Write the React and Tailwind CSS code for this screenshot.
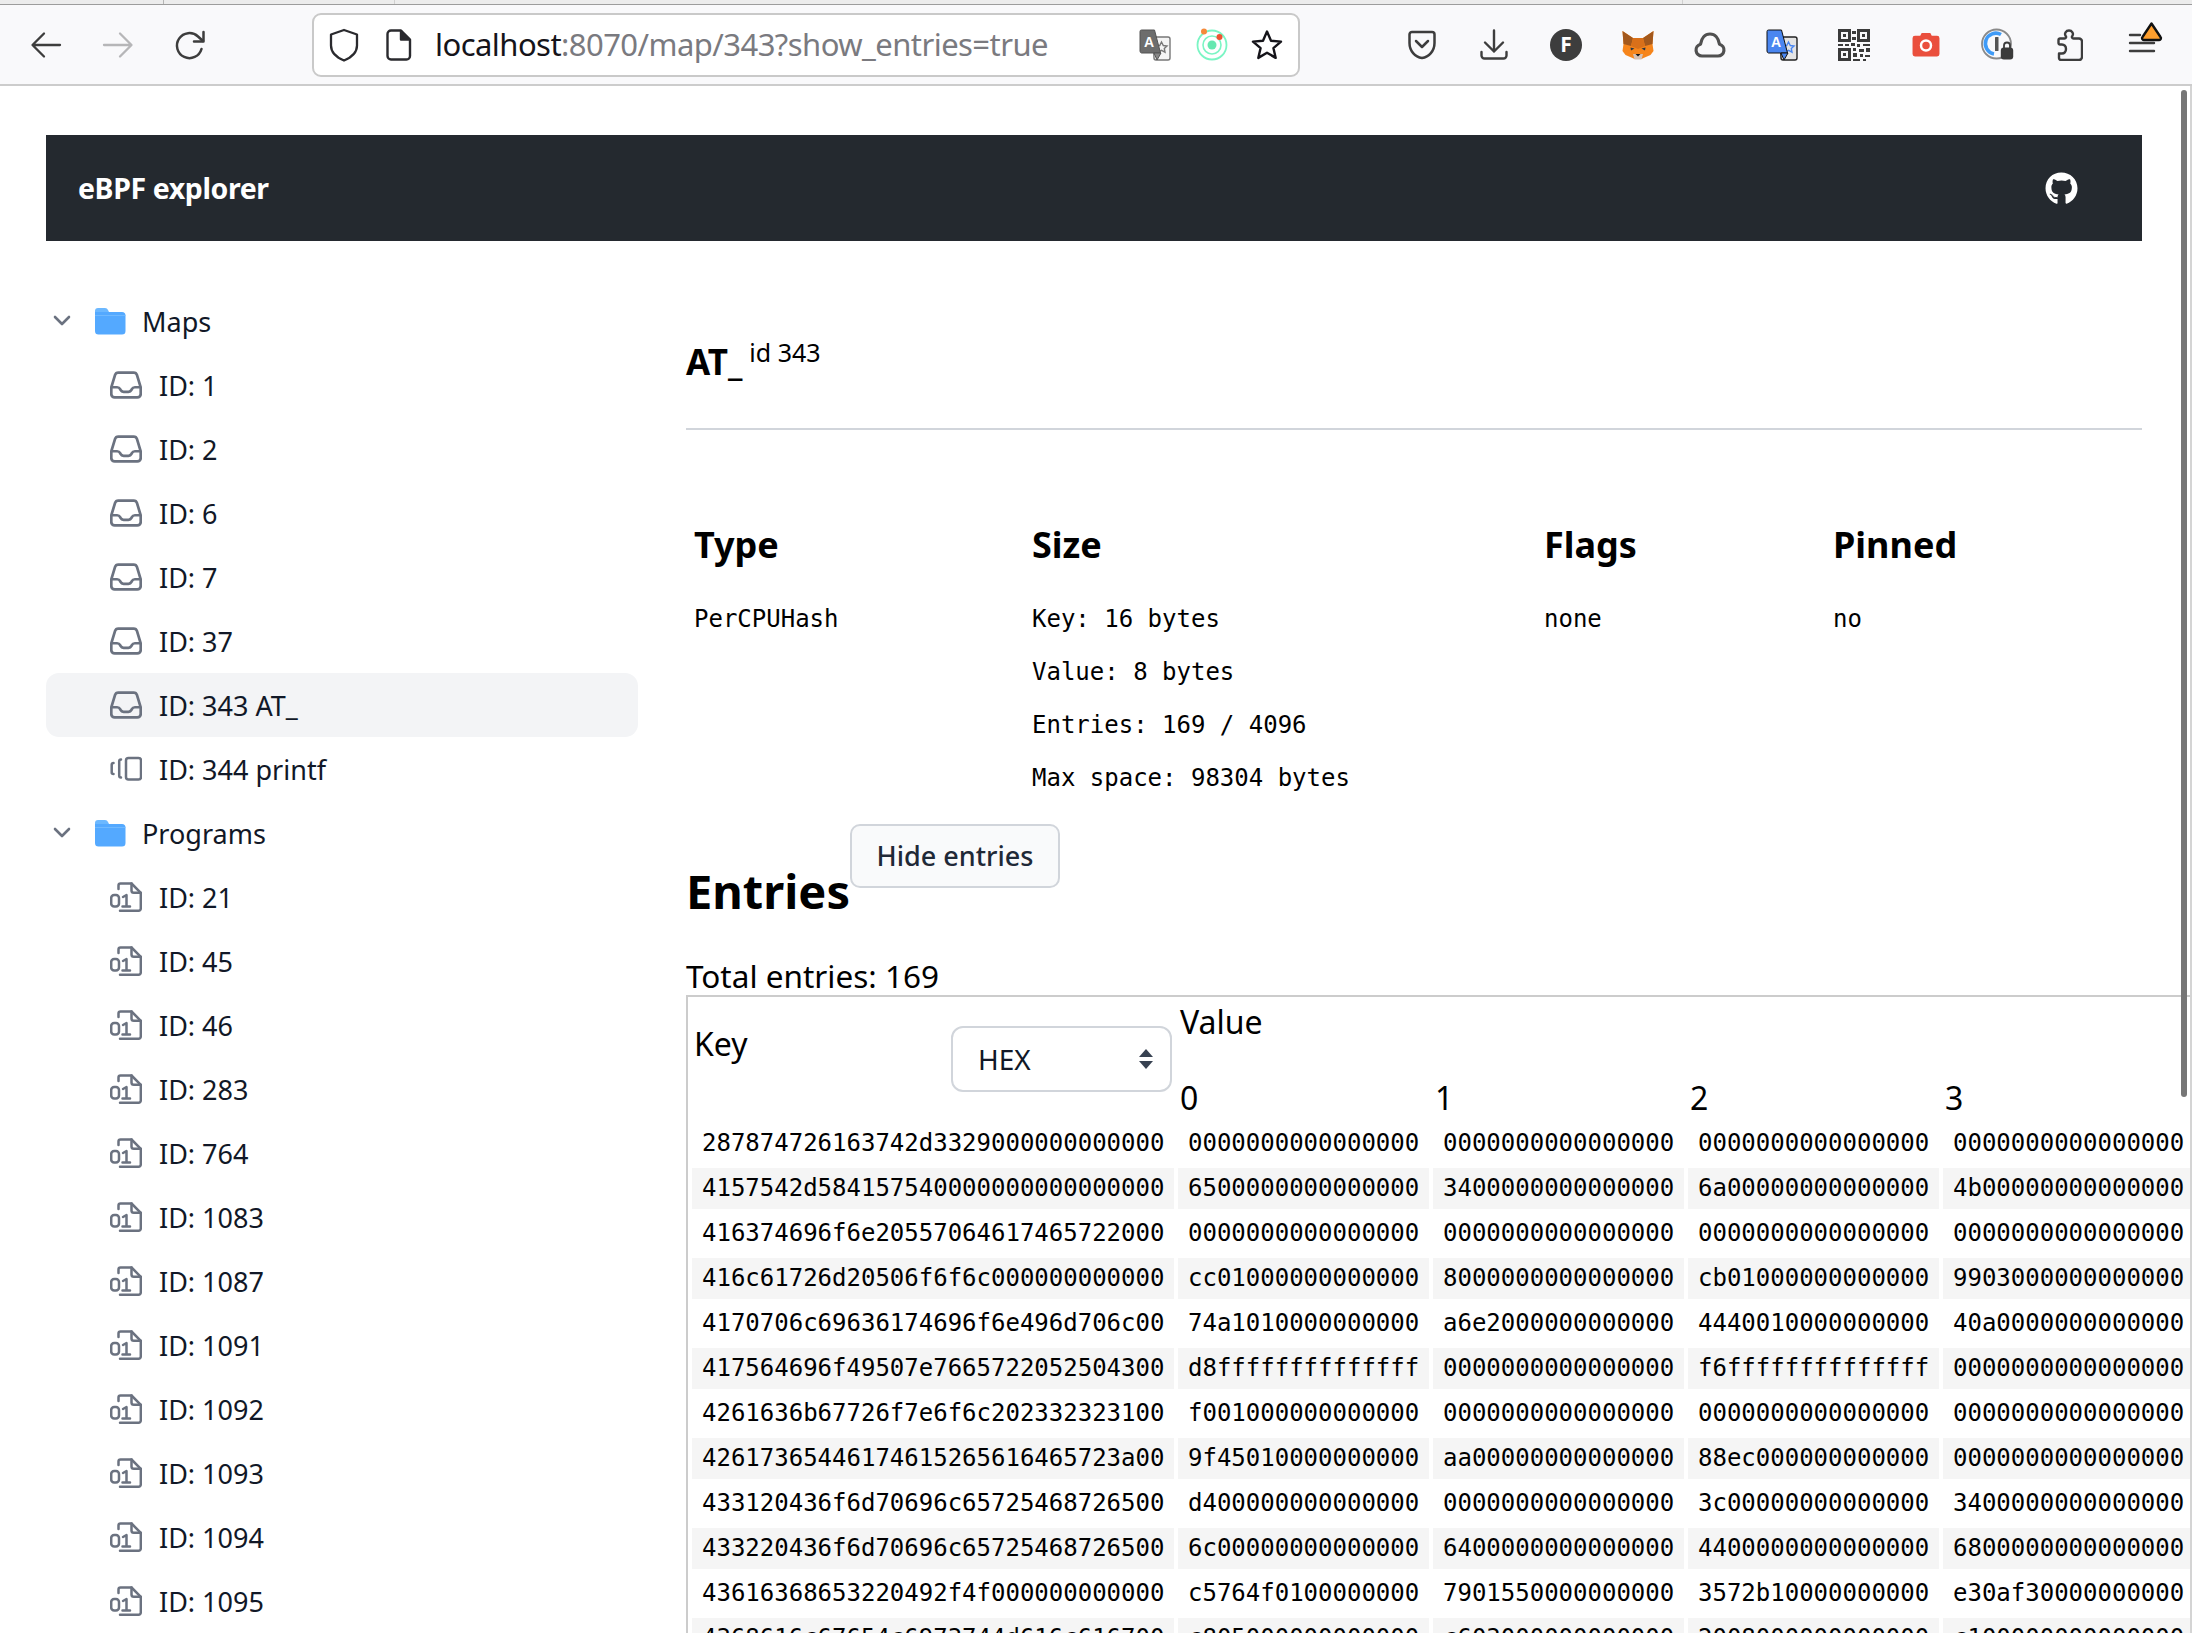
import React from "react";
import { FaGithub } from "react-icons/fa";

const maps = ["ID: 1", "ID: 2", "ID: 6", "ID: 7", "ID: 37", "ID: 343 AT_"];
const programs = ["ID: 21", "ID: 45", "ID: 46", "ID: 283", "ID: 764", "ID: 1083", "ID: 1087", "ID: 1091", "ID: 1092", "ID: 1093", "ID: 1094", "ID: 1095"];
const Z = "0000000000000000";
const rows = [
  ["287874726163742d3329000000000000", Z, Z, Z, Z],
  ["4157542d584157540000000000000000", "6500000000000000", "3400000000000000", "6a00000000000000", "4b00000000000000"],
  ["416374696f6e20557064617465722000", Z, Z, Z, Z],
  ["416c61726d20506f6f6c000000000000", "cc01000000000000", "8000000000000000", "cb01000000000000", "9903000000000000"],
  ["4170706c69636174696f6e496d706c00", "74a1010000000000", "a6e2000000000000", "4440010000000000", "40a0000000000000"],
  ["417564696f49507e7665722052504300", "d8ffffffffffffff", Z, "f6ffffffffffffff", Z],
  ["4261636b67726f7e6f6c202332323100", "f001000000000000", Z, Z, Z],
  ["42617365446174615265616465723a00", "9f45010000000000", "aa00000000000000", "88ec000000000000", Z],
  ["433120436f6d70696c65725468726500", "d400000000000000", Z, "3c00000000000000", "3400000000000000"],
  ["433220436f6d70696c65725468726500", "6c00000000000000", "6400000000000000", "4400000000000000", "6800000000000000"],
  ["43616368653220492f4f000000000000", "c5764f0100000000", "7901550000000000", "3572b10000000000", "e30af30000000000"],
  ["4368616c67654c6973744d616c616700", "c805000000000000", "c603000000000000", "2008000000000000", "c100000000000000"],
];

function Chevron() {
  return (
    <svg viewBox="0 0 18 12" className="w-[18px] h-[12px] text-[#6b7280]" fill="none" stroke="currentColor" strokeWidth="2.6" strokeLinecap="round" strokeLinejoin="round">
      <path d="M2 2l7 7 7-7" />
    </svg>
  );
}
function Folder() {
  return (
    <svg viewBox="0 0 32 28" className="w-[32px] h-[28px]">
      <path d="M1 4a3 3 0 0 1 3-3h7c1.500 0 2.300.7 3 2l1 2H1z" fill="#6cb8ff" />
      <path d="M1 5h27a3.500 3.500 0 0 1 3.500 3.500V24a3.500 3.500 0 0 1-3.500 3.500H4.500A3.500 3.500 0 0 1 1 24z" fill="#54a9ff" />
      <path d="M1 8.500h30.500" stroke="#7cc0ff" strokeWidth="1" opacity="0.7" />
    </svg>
  );
}
function Inbox() {
  return (
    <svg viewBox="1.4 2.9 21.2 18.2" className="w-[32px] h-[28px] text-[#6b7280]" fill="none" stroke="currentColor" strokeWidth="1.8" strokeLinejoin="round" strokeLinecap="round">
      <path d="M2.25 13.5h3.86a2.25 2.25 0 0 1 2.012 1.244l.256.512a2.25 2.25 0 0 0 2.013 1.244h3.218a2.25 2.25 0 0 0 2.013-1.244l.256-.512a2.25 2.25 0 0 1 2.013-1.244h3.859m-19.5.338V18a2.25 2.25 0 0 0 2.25 2.25h15A2.25 2.25 0 0 0 21.750 18v-4.162c0-.224-.034-.447-.1-.661L19.240 5.338a2.25 2.25 0 0 0-2.150-1.588H6.911a2.25 2.25 0 0 0-2.150 1.588L2.350 13.177a2.25 2.250 0 0 0-.1.661Z" />
    </svg>
  );
}
function Ring() {
  return (
    <svg viewBox="0 0 32 26" className="w-[32px] h-[26px] text-[#6b7280]" fill="none" stroke="currentColor" strokeWidth="2.5" strokeLinecap="round">
      <rect x="16" y="2" width="15" height="21.500" rx="2.500" />
      <path d="M11 3.500c-1.300 0-1.800.8-1.800 2v14c0 1.200.5 2 1.800 2" />
      <path d="M3.500 7c-1.300 0-1.800.6-1.800 1.500v8c0 1 .5 1.500 1.800 1.500" />
    </svg>
  );
}
function Binary() {
  return (
    <svg viewBox="0 0 32 30" className="w-[32px] h-[30px] text-[#6b7280]" fill="none" stroke="currentColor" strokeWidth="2.5" strokeLinecap="round" strokeLinejoin="round">
      <path d="M8.500 7V3.500A2 2 0 0 1 10.500 1.500H21.500L30.800 10.800V26.500A2.200 2.200 0 0 1 28.600 28.700H10" />
      <path d="M21.500 1.500V8.500A2.300 2.300 0 0 0 23.800 10.800H30.800" />
      <rect x="1.200" y="13" width="7.800" height="11.500" rx="3" />
      <path d="M13 15l3.500-2v11.500M12.500 24.500h7.500" />
    </svg>
  );
}
function Leaf({ icon, label, active }) {
  return (
    <div className={`flex items-center h-[64px] pl-[64px] gap-[17px] rounded-[13px] ${active ? "bg-[#f3f4f6]" : ""}`}>
      <span className="w-[32px] h-[32px] flex items-center justify-center text-[#6b7280]">{icon}</span>
      <span>{label}</span>
    </div>
  );
}
function Group({ label }) {
  return (
    <div className="flex items-center h-[64px] pl-[7px]">
      <Chevron />
      <span className="ml-[23px] mr-[16px] flex"><Folder /></span>
      <span>{label}</span>
    </div>
  );
}

function Translate({ blue }) {
  const front = blue ? "#4a86f0" : "#6d6d6d";
  return (
    <svg viewBox="0 0 32 32" className="w-[32px] h-[32px]">
      <path d="M14 8h15a2 2 0 0 1 2 2v19a2 2 0 0 1-2 2H17a2 2 0 0 1-2-2z" fill={blue ? "#e4e4e4" : "#f4f4f4"} stroke={blue ? "#222" : "#777"} strokeWidth="1.400" />
      <path d="M22.500 13l1.800 3.500 3.700.5-2.700 2.500.7 3.700-3.500-1.800-3.300 1.800.5-3.700-2.500-2.500 3.500-.5z" fill="none" stroke={blue ? "#4a86f0" : "#777"} strokeWidth="1.400" />
      <path d="M2.500 1h13l6 23h-19a2 2 0 0 1-1.500-2V2.500A1.500 1.500 0 0 1 2.500 1z" fill={front} stroke={blue ? "#111" : "#555"} strokeWidth="1" />
      <path d="M15 24l3 7 4-7z" fill={blue ? "#4a86f0" : "#888"} stroke={blue ? "#111" : "#555"} strokeWidth="1" />
      <text x="10" y="18" textAnchor="middle" fontFamily="Liberation Sans" fontWeight="700" fontSize="14" fill="#fff">A</text>
    </svg>
  );
}
function Ion() {
  return (
    <svg viewBox="0 0 34 34" className="w-[34px] h-[34px]">
      <circle cx="17" cy="17" r="14.500" fill="none" stroke="#7bf5c4" strokeWidth="1.800" />
      <circle cx="17" cy="17" r="9" fill="none" stroke="#7bf5c4" strokeWidth="1.600" />
      <circle cx="17" cy="17" r="4.500" fill="#66e8b0" />
      <circle cx="9" cy="3.500" r="3" fill="#f58a3a" />
      <circle cx="24.500" cy="9" r="3" fill="#ee5233" />
    </svg>
  );
}
function Star() {
  return (
    <svg viewBox="0 0 32 32" className="w-[32px] h-[32px]" fill="none" stroke="#15141a" strokeWidth="2.400" strokeLinejoin="round">
      <path d="M16 2.500l4 9.200 10 .9-7.600 6.500 2.300 9.800L16 23.700l-8.700 5.200 2.300-9.800L2 12.600l10-.9z" />
    </svg>
  );
}
function Fox() {
  return (
    <svg viewBox="0 0 32 30" className="w-[32px] h-[30px]">
      <path d="M.5 1L11 8h10L31.500 1 30.500 14l1 7-3 4-7 3-2 1h-7l-2-1-7-3-3-4 1-7z" fill="#f6851b" />
      <path d="M.5 1L11 8 9 16 1.500 14zM31.500 1L21 8l2 8 7.500-2z" fill="#a3581c" />
      <path d="M11 8h10l2 8-7 3-7-3z" fill="#d9701a" />
      <path d="M8.500 17.500l4 1-3.500 2zM23.500 17.500l-4 1 3.500 2z" fill="#233447" />
      <path d="M11 24h10l-1.500 5.500h-7z" fill="#d7c1b3" />
      <path d="M13.500 24h5l-2.500 2.500z" fill="#161616" />
    </svg>
  );
}
function QR() {
  const d = "M0 0h13v13H0zM3 3v7h7V3zM5 5h3v3H5zM19 0h13v13H19zM22 3v7h7V3zM24 5h3v3h-3zM0 19h13v13H0zM3 22v7h7v-7zM5 24h3v3H5zM14 2h4v3h-4zM14 8h4v3h-4zM0 15h5v2H0zM7 15h4v2H7zM13 14h4v3h-4zM19 15h3v3h-3zM25 15h7v2h-7zM15 19h3v3h-3zM21 20h5v3h-5zM28 19h4v4h-4zM15 24h4v4h-4zM22 25h3v3h-3zM27 26h5v2h-5zM15 30h7v2h-7zM25 30h3v2h-3z";
  return (
    <svg viewBox="0 0 32 32" className="w-[32px] h-[32px]">
      <path d={d} fill="#3b3b3b" fillRule="evenodd" />
    </svg>
  );
}
function Camera() {
  return (
    <svg viewBox="0 0 28 26" className="w-[28px] h-[25px]">
      <path d="M2.500 4H8l1.500-3h9L20 4h5.500A2.500 2.500 0 0 1 28 6.500V23a2.500 2.500 0 0 1-2.500 2.500h-23A2.500 2.500 0 0 1 0 23V6.500A2.500 2.500 0 0 1 2.500 4z" fill="#ea4f3d" />
      <circle cx="14" cy="14" r="5.200" fill="none" stroke="#fff" strokeWidth="2.600" />
    </svg>
  );
}
function OnePass() {
  return (
    <svg viewBox="0 0 34 34" className="w-[34px] h-[34px]">
      <circle cx="15.500" cy="16" r="14.500" fill="none" stroke="#8a8a8a" strokeWidth="1.800" />
      <path d="M20 6.500A10.500 10.500 0 1 0 13 26" fill="none" stroke="#3f9bf7" strokeWidth="3.600" />
      <rect x="14" y="9" width="3.500" height="14" rx="0.500" fill="#555" />
      <path d="M23 20v-2.500a3 3 0 0 1 6 0V20" fill="none" stroke="#3b3b3b" strokeWidth="1.800" />
      <rect x="19.800" y="19.500" width="12.400" height="12" rx="3" fill="#3b3b3b" />
    </svg>
  );
}
function PuzzlePiece() {
  return (
    <svg viewBox="0 0 26 32" className="w-[26px] h-[32px]" fill="none" stroke="#3d3d3d" strokeWidth="2.400" strokeLinejoin="round">
      <path d="M3 9.500H7.500C9 9.500 9.500 8 8.700 7 7 4.500 9 1.500 12 1.500S17 4.500 15.300 7C14.500 8 15 9.500 16.500 9.500H22A3 3 0 0 1 25 12.500V28A3 3 0 0 1 22 31H4A2 2 0 0 1 2 29V24.500H4C7.500 25 9 22.500 9 20 9 17.500 7.500 15 4 15.500H3A1.500 1.500 0 0 1 1.500 14V11A1.500 1.500 0 0 1 3 9.500Z" />
    </svg>
  );
}
function MenuAlert() {
  return (
    <svg viewBox="0 0 34 36" className="w-[34px] h-[36px] overflow-visible ml-[8px] mt-[-12px]">
      <path d="M1 14h10M1 22h24M1 30h24" stroke="#3d3d3d" strokeWidth="2.400" strokeLinecap="round" />
      <path d="M22.500 2.500l9 13.500a1.800 1.800 0 0 1-1.500 3H15a1.800 1.800 0 0 1-1.500-3z" fill="#ff9f2e" stroke="#111" strokeWidth="2.400" strokeLinejoin="round" />
    </svg>
  );
}

function Btn({ children }) {
  return <div className="w-[72px] h-full flex items-center justify-center shrink-0">{children}</div>;
}

function Toolbar() {
  return (
    <div className="shrink-0">
      <div className="h-[5px] bg-[#ececec] border-b border-[#9c9c9c] relative flex">
        <span className="ml-[163px] w-px bg-[#b5b5b5]" />
        <span className="ml-[230px] w-px bg-[#d0d0d0]" />
        <span className="ml-[1287px] w-px bg-[#d0d0d0]" />
      </div>
      <div className="h-[81px] bg-[#f9f9fb] border-b-2 border-[#cccccc] flex items-center pl-[10px]">
        <Btn>
          <svg viewBox="0 0 32 32" className="w-[32px] h-[32px]" fill="none" stroke="#3d3d3d" strokeWidth="2.300" strokeLinecap="round" strokeLinejoin="round"><path d="M30 16H3M14 4.500L2.500 16 14 27.500" /></svg>
        </Btn>
        <Btn>
          <svg viewBox="0 0 32 32" className="w-[32px] h-[32px]" fill="none" stroke="#b6b6b8" strokeWidth="2.300" strokeLinecap="round" strokeLinejoin="round"><path d="M2 16h27M18 4.500L29.500 16 18 27.500" /></svg>
        </Btn>
        <Btn>
          <svg viewBox="0 0 32 32" className="w-[32px] h-[32px]" fill="none" stroke="#3d3d3d" strokeWidth="2.500" strokeLinecap="round" strokeLinejoin="round"><path d="M27.500 20A12.500 12.500 0 1 1 24 7.500L29 12" /><path d="M29.500 3v9.500H20" /></svg>
        </Btn>
        <div className="ml-[86px] w-[988px] h-[64px] bg-white border-2 border-[#c9c9c9] rounded-[9px] flex items-center shrink-0">
          <svg viewBox="0 0 30 34" className="ml-[15px] w-[30px] h-[34px]" fill="none" stroke="#2a2a2e" strokeWidth="2.300" strokeLinejoin="round"><path d="M15 2l13 4.500v11C28 25 21 30 15 32.500 9 30 2 25 2 17.500v-11z" /></svg>
          <svg viewBox="0 0 26 32" className="ml-[27px] w-[26px] h-[32px]" fill="none" stroke="#2a2a2e" strokeWidth="2.400" strokeLinejoin="round"><path d="M5 1.500h10l9 9V27a3.500 3.500 0 0 1-3.500 3.500H5A3.500 3.500 0 0 1 1.500 27V5A3.500 3.500 0 0 1 5 1.500z" /><path d="M15 1.500V10.500h9" fill="#2a2a2e" /></svg>
          <span className="ml-[23px] text-[31px] leading-none tracking-[-0.55px] text-[#15141a] font-['Noto_Sans',sans-serif] whitespace-nowrap">
            localhost<span className="text-[#7a7a7f]">:8070/map/343?show_entries=true</span>
          </span>
          <span className="flex-1" />
          <span className="flex items-center"><Translate /></span>
          <span className="ml-[24px] flex items-center"><Ion /></span>
          <span className="ml-[22px] mr-[15px] flex items-center"><Star /></span>
        </div>
        <div className="ml-[86px] flex items-center h-full">
          <Btn>
            <svg viewBox="0 0 28 32" className="w-[28px] h-[32px]" fill="none" stroke="#3d3d3d" strokeWidth="2.500" strokeLinecap="round" strokeLinejoin="round"><path d="M4 3h20a2.500 2.500 0 0 1 2.500 2.500V14c0 8-5.500 14-12.500 15C7 28 1.500 22 1.500 14V5.500A2.500 2.500 0 0 1 4 3z" /><path d="M8 12l6 6 6-6" /></svg>
          </Btn>
          <Btn>
            <svg viewBox="0 0 28 32" className="w-[28px] h-[32px]" fill="none" stroke="#3d3d3d" strokeWidth="2.400" strokeLinecap="round" strokeLinejoin="round"><path d="M14 1.500v21M5 13.500l9 9 9-9" /><path d="M1.500 23v3.500a3 3 0 0 0 3 3h19a3 3 0 0 0 3-3V23" /></svg>
          </Btn>
          <Btn>
            <span className="w-[32px] h-[32px] rounded-full bg-[#3d3d3d] text-white flex items-center justify-center text-[21px] font-bold font-['Noto_Sans',sans-serif] leading-none">F</span>
          </Btn>
          <Btn><Fox /></Btn>
          <Btn>
            <svg viewBox="0 0 32 26" className="w-[32px] h-[26px]" fill="none" stroke="#505050" strokeWidth="3.200" strokeLinejoin="round"><path d="M8 24h16a6 6 0 0 0 1.500-11.800C24.500 6 21 2 16 2 11 2 7.500 6 6.500 12.200A6 6 0 0 0 8 24z" /></svg>
          </Btn>
          <Btn><Translate blue /></Btn>
          <Btn><QR /></Btn>
          <Btn><Camera /></Btn>
          <Btn><OnePass /></Btn>
          <Btn><PuzzlePiece /></Btn>
          <Btn><MenuAlert /></Btn>
        </div>
      </div>
    </div>
  );
}

export default function App() {
  return (
    <div className="relative h-screen overflow-hidden bg-white flex flex-col font-['Noto_Sans',sans-serif] text-black">
      <Toolbar />
      <div className="flex-1 overflow-hidden px-[46px] pt-[49px] w-[2192px]">
        <header className="w-[2096px] h-[106px] bg-[#24292f] flex items-center justify-between pl-[32px] pr-[64px]">
          <span className="text-white text-[28.5px] font-bold tracking-[-0.4px]">eBPF explorer</span>
          <FaGithub className="text-white w-[33px] h-[33px]" />
        </header>
        <div className="flex mt-[48px] w-[2146px]">
          <aside className="w-[592px] shrink-0 text-[27px] leading-none text-[#111827]">
            <Group label="Maps" />
            {maps.map((m, i) => (
              <Leaf key={m} label={m} active={i === 5} icon={<Inbox />} />
            ))}
            <Leaf label="ID: 344 printf" icon={<Ring />} />
            <Group label="Programs" />
            {programs.map((p) => (
              <Leaf key={p} label={p} icon={<Binary />} />
            ))}
          </aside>
          <main className="ml-[48px] flex-1 min-w-0">
            <div className="h-[141px] border-b-2 border-[#d1d5db] w-[1456px] flex items-start pt-[43px]">
              <span className="text-[35px] font-bold leading-none mt-[12px]">AT_</span>
              <span className="ml-[7px] text-[25px] leading-none mt-[8px]">id 343</span>
            </div>
            <div className="grid grid-cols-[337px_513px_288px_1fr] pl-[8px] pt-[87px] w-[1456px]">
              <div className="text-[36px] font-bold leading-[56px]">Type</div>
              <div className="pl-[1px] text-[36px] font-bold leading-[56px]">Size</div>
              <div className="text-[36px] font-bold leading-[56px]">Flags</div>
              <div className="pl-[1px] text-[36px] font-bold leading-[56px]">Pinned</div>
              <div className="mt-[20px] font-['DejaVu_Sans_Mono',monospace] text-[24px] leading-[53px]">PerCPUHash</div>
              <div className="pl-[1px] mt-[20px] font-['DejaVu_Sans_Mono',monospace] text-[24px] leading-[53px] flex flex-col">
                <span>Key: 16 bytes</span>
                <span>Value: 8 bytes</span>
                <span>Entries: 169 / 4096</span>
                <span>Max space: 98304 bytes</span>
              </div>
              <div className="mt-[20px] font-['DejaVu_Sans_Mono',monospace] text-[24px] leading-[53px]">none</div>
              <div className="pl-[1px] mt-[20px] font-['DejaVu_Sans_Mono',monospace] text-[24px] leading-[53px]">no</div>
            </div>
            <div className="flex items-end h-[96px] mt-[10px] w-[800px]">
              <h2 className="text-[47px] font-bold leading-none mb-[-4px]">Entries</h2>
              <button className="mb-[23px] w-[210px] h-[64px] rounded-[10px] bg-[#f9fafb] border-2 border-[#d1d5db] text-[27px] font-medium text-[#1f2937]">Hide entries</button>
            </div>
            <p className="text-[31.5px] leading-none mt-[49px] h-[35px] w-[600px]">Total entries: 169</p>
            <div className="border-t-2 border-l-2 border-[#cccccc] w-[1506px] overflow-hidden">
              <table className="table-fixed border-separate border-spacing-[4px] w-[1510px]">
                <colgroup>
                  <col className="w-[482px]" />
                  <col className="w-[251px]" />
                  <col className="w-[251px]" />
                  <col className="w-[251px]" />
                  <col className="w-[251px]" />
                </colgroup>
                <thead>
                  <tr>
                    <th rowSpan={2} className="p-0 font-normal text-left align-top">
                      <div className="flex items-start justify-between pl-[2px] pr-[2px] pt-[25px] text-[32px] leading-[40px]">
                        <span className="mt-[-2px]">Key</span>
                        <div className="relative w-[221px] h-[66px]">
                          <select defaultValue="HEX" className="appearance-none w-full h-full rounded-[12px] border-2 border-[#d1d5db] bg-white pl-[25px] text-[28px] text-[#111827] outline-none">
                            <option>HEX</option>
                          </select>
                          <svg viewBox="0 0 14 20" className="absolute right-[19px] top-[23px] w-[14px] h-[20px] pointer-events-none" fill="#374151"><path d="M7 0l7 8H0zM7 20L0 12h14z" /></svg>
                        </div>
                      </div>
                    </th>
                    <th colSpan={4} className="p-0 pl-[2px] pt-[1px] font-normal text-left text-[32px] leading-[40px] h-[41px] align-top">Value</th>
                  </tr>
                  <tr>
                    {[0, 1, 2, 3].map((n) => (
                      <th key={n} className="p-0 pl-[2px] pb-[1px] font-normal text-left text-[32px] leading-[40px] h-[73px] align-bottom">{n}</th>
                    ))}
                  </tr>
                </thead>
                <tbody className="font-['DejaVu_Sans_Mono',monospace] text-[24px] leading-[41px]">
                  {rows.map((r, i) => (
                    <tr key={r[0]}>
                      {r.map((c, j) => (
                        <td key={j} className={`p-0 pl-[10px] h-[41px] whitespace-nowrap ${i % 2 === 1 ? "bg-[#f5f5f5]" : ""}`}>{c}</td>
                      ))}
                    </tr>
                  ))}
                </tbody>
              </table>
            </div>
          </main>
        </div>
      </div>
      <div className="absolute right-[5px] top-[90px] w-[6px] h-[1007px] rounded-full bg-[#767676]" />
      <div className="absolute right-0 top-[86px] bottom-0 w-[2px] bg-[#d4d4d4]" />
    </div>
  );
}
